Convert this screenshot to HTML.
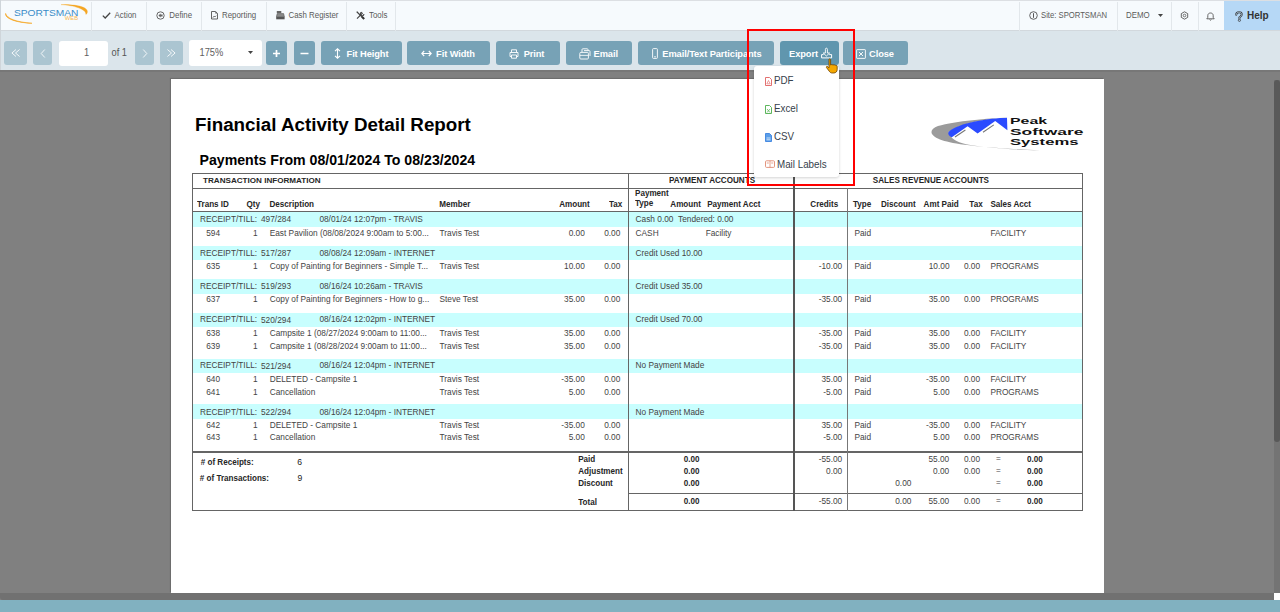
<!DOCTYPE html>
<html><head><meta charset="utf-8">
<style>
*{box-sizing:border-box}
html,body{margin:0;padding:0}
body{width:1280px;height:612px;overflow:hidden;position:relative;font-family:"Liberation Sans",sans-serif;background:#808080}
.t{position:absolute;white-space:nowrap;line-height:1}
.t.r{text-align:right}
.b{position:absolute}
#nav{position:absolute;left:0;top:0;width:1280px;height:31px;background:#f6fafd;border-top:1px solid #dcdfe3;border-bottom:1px solid #d2d8dd}
.sep{position:absolute;top:1px;width:1px;height:29px;background:#e2e7eb}
.nt{position:absolute;top:0;line-height:1;font-size:7.9px;color:#5a5a5a;white-space:nowrap}
#nav .nt{transform:scaleY(1.18);transform-origin:0 6.7px;margin-top:1.4px}
#tb{position:absolute;left:0;top:31px;width:1280px;height:39px;background:#dbe5eb}
.btn{position:absolute;top:41px;height:24px;border-radius:3px;background:#77a2b6;color:#fff;font-weight:700;font-size:9.3px;line-height:26.4px;text-align:center;white-space:nowrap;letter-spacing:-0.1px}
.dis{background:#abc5d1}
.btn svg{position:absolute}
#viewer{position:absolute;left:0;top:70px;width:1280px;height:523px;background:#808080}
</style></head><body>
<div id="viewer"></div>
<div class="b" style="left:0;top:70px;width:1280px;height:2px;background:#777"></div>
<div class="b" style="left:171px;top:79px;width:933px;height:514px;background:#fff;box-shadow:-1px -1px 1px rgba(0,0,0,0.15)"></div>
<div class="t" style="left:195.00px;top:115.59px;font-size:18.8px;font-weight:700;color:#000;">Financial Activity Detail Report</div>
<div class="t" style="left:199.50px;top:152.82px;font-size:14.15px;font-weight:700;color:#000;">Payments From 08/01/2024 To 08/23/2024</div>
<svg style="position:absolute;left:925px;top:110px" width="165" height="45" viewBox="925 110 165 45">
<path d="M1007 117.7 C990 118 955 121 938 126 C929 129.5 929 135 940 139.5 C952 144 975 147.2 1040 150.4 C1010 149.6 990 147.8 975 145.8 C962 144 954 140.8 951.5 137.2 L948.5 132 C960 123 990 118.5 1007 117.7 Z" fill="#9b9b9b"/>
<path d="M948.5 132 C958 122.5 990 118.2 1007 117.7 L1007.4 130.2 L995.2 121 L977.6 133.5 L967.6 126.2 L951.8 137.2 C949 136 947.6 134 948.5 132 Z" fill="#2b4bff"/>
<path d="M955 137 L965.4 130 M983 132.2 L993.8 124.9" stroke="#777" stroke-width="1.1"/>
<text x="1010" y="124.3" font-family="Liberation Sans" font-weight="700" font-size="8.8" fill="#111" textLength="37" lengthAdjust="spacingAndGlyphs">Peak</text>
<text x="1010" y="135.2" font-family="Liberation Sans" font-weight="700" font-size="8.8" fill="#111" textLength="73.5" lengthAdjust="spacingAndGlyphs">Software</text>
<text x="1010" y="145.1" font-family="Liberation Sans" font-weight="700" font-size="8.8" fill="#111" textLength="68.5" lengthAdjust="spacingAndGlyphs">Systems</text>
</svg>
<div class="b" style="left:193px;top:211.9px;width:889.5px;height:14.7px;background:#c8fefe;"></div>
<div class="b" style="left:193px;top:245.6px;width:889.5px;height:14.7px;background:#c8fefe;"></div>
<div class="b" style="left:193px;top:279px;width:889.5px;height:14.7px;background:#c8fefe;"></div>
<div class="b" style="left:193px;top:312.5px;width:889.5px;height:14.7px;background:#c8fefe;"></div>
<div class="b" style="left:193px;top:358.6px;width:889.5px;height:14.7px;background:#c8fefe;"></div>
<div class="b" style="left:193px;top:404.2px;width:889.5px;height:14.7px;background:#c8fefe;"></div>
<div class="b" style="left:192px;top:172.9px;width:891.2px;height:1.2px;background:#656565;"></div>
<div class="b" style="left:192px;top:187.70000000000002px;width:891.2px;height:1.2px;background:#656565;"></div>
<div class="b" style="left:192px;top:210.8px;width:891.2px;height:1.2px;background:#656565;"></div>
<div class="b" style="left:192px;top:451.4px;width:891.2px;height:1.2px;background:#656565;"></div>
<div class="b" style="left:628.5px;top:492.9px;width:454.70000000000005px;height:1.2px;background:#656565;"></div>
<div class="b" style="left:192px;top:510.2px;width:891.2px;height:1.2px;background:#656565;"></div>
<div class="b" style="left:192.0px;top:173px;width:1.2px;height:338.4px;background:#656565;"></div>
<div class="b" style="left:1082.0px;top:173px;width:1.2px;height:338.4px;background:#656565;"></div>
<div class="b" style="left:627.9px;top:173px;width:1.2px;height:338.4px;background:#656565;"></div>
<div class="b" style="left:793.2px;top:173px;width:2px;height:338.4px;background:#555;"></div>
<div class="b" style="left:846.75px;top:188.3px;width:1.1px;height:322.5px;background:#777;"></div>
<div class="t" style="left:203.00px;top:176.74px;font-size:8.1px;font-weight:700;color:#262626;letter-spacing:0.05pxtransform:scaleY(1.2);transform-origin:0 6.86px;">TRANSACTION INFORMATION</div>
<div class="t" style="left:669.00px;top:176.74px;font-size:8.1px;font-weight:700;color:#262626;transform:scaleY(1.2);transform-origin:0 6.86px;">PAYMENT ACCOUNTS</div>
<div class="t" style="left:872.80px;top:176.74px;font-size:8.1px;font-weight:700;color:#262626;transform:scaleY(1.2);transform-origin:0 6.86px;">SALES REVENUE ACCOUNTS</div>
<div class="t" style="left:197.00px;top:200.94px;font-size:8.1px;font-weight:700;color:#262626;transform:scaleY(1.2);transform-origin:0 6.86px;">Trans ID</div>
<div class="t" style="left:246.50px;top:200.94px;font-size:8.1px;font-weight:700;color:#262626;transform:scaleY(1.2);transform-origin:0 6.86px;">Qty</div>
<div class="t" style="left:269.50px;top:200.94px;font-size:8.1px;font-weight:700;color:#262626;transform:scaleY(1.2);transform-origin:0 6.86px;">Description</div>
<div class="t" style="left:439.30px;top:200.94px;font-size:8.1px;font-weight:700;color:#262626;transform:scaleY(1.2);transform-origin:0 6.86px;">Member</div>
<div class="t" style="left:559.20px;top:200.94px;font-size:8.1px;font-weight:700;color:#262626;transform:scaleY(1.2);transform-origin:0 6.86px;">Amount</div>
<div class="t" style="left:609.00px;top:200.94px;font-size:8.1px;font-weight:700;color:#262626;transform:scaleY(1.2);transform-origin:0 6.86px;">Tax</div>
<div class="t" style="left:670.30px;top:200.94px;font-size:8.1px;font-weight:700;color:#262626;transform:scaleY(1.2);transform-origin:0 6.86px;">Amount</div>
<div class="t" style="left:707.20px;top:200.94px;font-size:8.1px;font-weight:700;color:#262626;transform:scaleY(1.2);transform-origin:0 6.86px;">Payment Acct</div>
<div class="t" style="left:810.30px;top:200.94px;font-size:8.1px;font-weight:700;color:#262626;transform:scaleY(1.2);transform-origin:0 6.86px;">Credits</div>
<div class="t" style="left:852.90px;top:200.94px;font-size:8.1px;font-weight:700;color:#262626;transform:scaleY(1.2);transform-origin:0 6.86px;">Type</div>
<div class="t" style="left:881.00px;top:200.94px;font-size:8.1px;font-weight:700;color:#262626;transform:scaleY(1.2);transform-origin:0 6.86px;">Discount</div>
<div class="t" style="left:923.60px;top:200.94px;font-size:8.1px;font-weight:700;color:#262626;transform:scaleY(1.2);transform-origin:0 6.86px;">Amt Paid</div>
<div class="t" style="left:969.30px;top:200.94px;font-size:8.1px;font-weight:700;color:#262626;transform:scaleY(1.2);transform-origin:0 6.86px;">Tax</div>
<div class="t" style="left:990.40px;top:200.94px;font-size:8.1px;font-weight:700;color:#262626;transform:scaleY(1.2);transform-origin:0 6.86px;">Sales Acct</div>
<div class="t" style="left:635.00px;top:190.34px;font-size:8.1px;font-weight:700;color:#262626;transform:scaleY(1.2);transform-origin:0 6.86px;">Payment</div>
<div class="t" style="left:635.00px;top:199.94px;font-size:8.1px;font-weight:700;color:#262626;transform:scaleY(1.2);transform-origin:0 6.86px;">Type</div>
<div class="t" style="left:200.00px;top:214.67px;font-size:8.3px;font-weight:400;color:#444444;">RECEIPT/TILL:</div>
<div class="t" style="left:261.00px;top:215.17px;font-size:8.3px;font-weight:400;color:#444444;">497/284</div>
<div class="t" style="left:319.40px;top:214.67px;font-size:8.3px;font-weight:400;color:#444444;">08/01/24 12:07pm - TRAVIS</div>
<div class="t" style="left:635.60px;top:214.67px;font-size:8.3px;font-weight:400;color:#444444;">Cash 0.00&nbsp;&nbsp;Tendered: 0.00</div>
<div class="t" style="left:206.20px;top:228.97px;font-size:8.3px;font-weight:400;color:#444444;">594</div>
<div class="t r" style="left:-42.40px;top:228.97px;width:300px;font-size:8.3px;font-weight:400;color:#444444;">1</div>
<div class="t" style="left:269.70px;top:228.97px;font-size:8.3px;font-weight:400;color:#444444;">East Pavilion (08/08/2024 9:00am to 5:00...</div>
<div class="t" style="left:439.50px;top:228.97px;font-size:8.3px;font-weight:400;color:#444444;">Travis Test</div>
<div class="t r" style="left:284.80px;top:228.97px;width:300px;font-size:8.3px;font-weight:400;color:#444444;">0.00</div>
<div class="t r" style="left:320.30px;top:228.97px;width:300px;font-size:8.3px;font-weight:400;color:#444444;">0.00</div>
<div class="t" style="left:635.60px;top:228.97px;font-size:8.3px;font-weight:400;color:#444444;">CASH</div>
<div class="t" style="left:705.70px;top:228.97px;font-size:8.3px;font-weight:400;color:#444444;">Facility</div>
<div class="t" style="left:854.40px;top:228.97px;font-size:8.3px;font-weight:400;color:#444444;">Paid</div>
<div class="t" style="left:990.40px;top:228.97px;font-size:8.3px;font-weight:400;color:#444444;">FACILITY</div>
<div class="t" style="left:200.00px;top:248.67px;font-size:8.3px;font-weight:400;color:#444444;">RECEIPT/TILL:</div>
<div class="t" style="left:261.00px;top:249.17px;font-size:8.3px;font-weight:400;color:#444444;">517/287</div>
<div class="t" style="left:319.40px;top:248.67px;font-size:8.3px;font-weight:400;color:#444444;">08/08/24 12:09am - INTERNET</div>
<div class="t" style="left:635.60px;top:248.67px;font-size:8.3px;font-weight:400;color:#444444;">Credit Used 10.00</div>
<div class="t" style="left:206.20px;top:262.27px;font-size:8.3px;font-weight:400;color:#444444;">635</div>
<div class="t r" style="left:-42.40px;top:262.27px;width:300px;font-size:8.3px;font-weight:400;color:#444444;">1</div>
<div class="t" style="left:269.70px;top:262.27px;font-size:8.3px;font-weight:400;color:#444444;">Copy of Painting for Beginners - Simple T...</div>
<div class="t" style="left:439.50px;top:262.27px;font-size:8.3px;font-weight:400;color:#444444;">Travis Test</div>
<div class="t r" style="left:284.80px;top:262.27px;width:300px;font-size:8.3px;font-weight:400;color:#444444;">10.00</div>
<div class="t r" style="left:320.30px;top:262.27px;width:300px;font-size:8.3px;font-weight:400;color:#444444;">0.00</div>
<div class="t r" style="left:542.20px;top:262.27px;width:300px;font-size:8.3px;font-weight:400;color:#444444;">-10.00</div>
<div class="t" style="left:854.40px;top:262.27px;font-size:8.3px;font-weight:400;color:#444444;">Paid</div>
<div class="t r" style="left:649.50px;top:262.27px;width:300px;font-size:8.3px;font-weight:400;color:#444444;">10.00</div>
<div class="t r" style="left:680.10px;top:262.27px;width:300px;font-size:8.3px;font-weight:400;color:#444444;">0.00</div>
<div class="t" style="left:990.40px;top:262.27px;font-size:8.3px;font-weight:400;color:#444444;">PROGRAMS</div>
<div class="t" style="left:200.00px;top:281.67px;font-size:8.3px;font-weight:400;color:#444444;">RECEIPT/TILL:</div>
<div class="t" style="left:261.00px;top:282.17px;font-size:8.3px;font-weight:400;color:#444444;">519/293</div>
<div class="t" style="left:319.40px;top:281.67px;font-size:8.3px;font-weight:400;color:#444444;">08/16/24 10:26am - TRAVIS</div>
<div class="t" style="left:635.60px;top:281.67px;font-size:8.3px;font-weight:400;color:#444444;">Credit Used 35.00</div>
<div class="t" style="left:206.20px;top:295.47px;font-size:8.3px;font-weight:400;color:#444444;">637</div>
<div class="t r" style="left:-42.40px;top:295.47px;width:300px;font-size:8.3px;font-weight:400;color:#444444;">1</div>
<div class="t" style="left:269.70px;top:295.47px;font-size:8.3px;font-weight:400;color:#444444;">Copy of Painting for Beginners - How to g...</div>
<div class="t" style="left:439.50px;top:295.47px;font-size:8.3px;font-weight:400;color:#444444;">Steve Test</div>
<div class="t r" style="left:284.80px;top:295.47px;width:300px;font-size:8.3px;font-weight:400;color:#444444;">35.00</div>
<div class="t r" style="left:320.30px;top:295.47px;width:300px;font-size:8.3px;font-weight:400;color:#444444;">0.00</div>
<div class="t r" style="left:542.20px;top:295.47px;width:300px;font-size:8.3px;font-weight:400;color:#444444;">-35.00</div>
<div class="t" style="left:854.40px;top:295.47px;font-size:8.3px;font-weight:400;color:#444444;">Paid</div>
<div class="t r" style="left:649.50px;top:295.47px;width:300px;font-size:8.3px;font-weight:400;color:#444444;">35.00</div>
<div class="t r" style="left:680.10px;top:295.47px;width:300px;font-size:8.3px;font-weight:400;color:#444444;">0.00</div>
<div class="t" style="left:990.40px;top:295.47px;font-size:8.3px;font-weight:400;color:#444444;">PROGRAMS</div>
<div class="t" style="left:200.00px;top:315.37px;font-size:8.3px;font-weight:400;color:#444444;">RECEIPT/TILL:</div>
<div class="t" style="left:261.00px;top:315.87px;font-size:8.3px;font-weight:400;color:#444444;">520/294</div>
<div class="t" style="left:319.40px;top:315.37px;font-size:8.3px;font-weight:400;color:#444444;">08/16/24 12:02pm - INTERNET</div>
<div class="t" style="left:635.60px;top:315.37px;font-size:8.3px;font-weight:400;color:#444444;">Credit Used 70.00</div>
<div class="t" style="left:206.20px;top:328.97px;font-size:8.3px;font-weight:400;color:#444444;">638</div>
<div class="t r" style="left:-42.40px;top:328.97px;width:300px;font-size:8.3px;font-weight:400;color:#444444;">1</div>
<div class="t" style="left:269.70px;top:328.97px;font-size:8.3px;font-weight:400;color:#444444;">Campsite 1 (08/27/2024 9:00am to 11:00...</div>
<div class="t" style="left:439.50px;top:328.97px;font-size:8.3px;font-weight:400;color:#444444;">Travis Test</div>
<div class="t r" style="left:284.80px;top:328.97px;width:300px;font-size:8.3px;font-weight:400;color:#444444;">35.00</div>
<div class="t r" style="left:320.30px;top:328.97px;width:300px;font-size:8.3px;font-weight:400;color:#444444;">0.00</div>
<div class="t r" style="left:542.20px;top:328.97px;width:300px;font-size:8.3px;font-weight:400;color:#444444;">-35.00</div>
<div class="t" style="left:854.40px;top:328.97px;font-size:8.3px;font-weight:400;color:#444444;">Paid</div>
<div class="t r" style="left:649.50px;top:328.97px;width:300px;font-size:8.3px;font-weight:400;color:#444444;">35.00</div>
<div class="t r" style="left:680.10px;top:328.97px;width:300px;font-size:8.3px;font-weight:400;color:#444444;">0.00</div>
<div class="t" style="left:990.40px;top:328.97px;font-size:8.3px;font-weight:400;color:#444444;">FACILITY</div>
<div class="t" style="left:206.20px;top:341.97px;font-size:8.3px;font-weight:400;color:#444444;">639</div>
<div class="t r" style="left:-42.40px;top:341.97px;width:300px;font-size:8.3px;font-weight:400;color:#444444;">1</div>
<div class="t" style="left:269.70px;top:341.97px;font-size:8.3px;font-weight:400;color:#444444;">Campsite 1 (08/28/2024 9:00am to 11:00...</div>
<div class="t" style="left:439.50px;top:341.97px;font-size:8.3px;font-weight:400;color:#444444;">Travis Test</div>
<div class="t r" style="left:284.80px;top:341.97px;width:300px;font-size:8.3px;font-weight:400;color:#444444;">35.00</div>
<div class="t r" style="left:320.30px;top:341.97px;width:300px;font-size:8.3px;font-weight:400;color:#444444;">0.00</div>
<div class="t r" style="left:542.20px;top:341.97px;width:300px;font-size:8.3px;font-weight:400;color:#444444;">-35.00</div>
<div class="t" style="left:854.40px;top:341.97px;font-size:8.3px;font-weight:400;color:#444444;">Paid</div>
<div class="t r" style="left:649.50px;top:341.97px;width:300px;font-size:8.3px;font-weight:400;color:#444444;">35.00</div>
<div class="t r" style="left:680.10px;top:341.97px;width:300px;font-size:8.3px;font-weight:400;color:#444444;">0.00</div>
<div class="t" style="left:990.40px;top:341.97px;font-size:8.3px;font-weight:400;color:#444444;">FACILITY</div>
<div class="t" style="left:200.00px;top:361.47px;font-size:8.3px;font-weight:400;color:#444444;">RECEIPT/TILL:</div>
<div class="t" style="left:261.00px;top:361.97px;font-size:8.3px;font-weight:400;color:#444444;">521/294</div>
<div class="t" style="left:319.40px;top:361.47px;font-size:8.3px;font-weight:400;color:#444444;">08/16/24 12:04pm - INTERNET</div>
<div class="t" style="left:635.60px;top:361.47px;font-size:8.3px;font-weight:400;color:#444444;">No Payment Made</div>
<div class="t" style="left:206.20px;top:375.07px;font-size:8.3px;font-weight:400;color:#444444;">640</div>
<div class="t r" style="left:-42.40px;top:375.07px;width:300px;font-size:8.3px;font-weight:400;color:#444444;">1</div>
<div class="t" style="left:269.70px;top:375.07px;font-size:8.3px;font-weight:400;color:#444444;">DELETED - Campsite 1</div>
<div class="t" style="left:439.50px;top:375.07px;font-size:8.3px;font-weight:400;color:#444444;">Travis Test</div>
<div class="t r" style="left:284.80px;top:375.07px;width:300px;font-size:8.3px;font-weight:400;color:#444444;">-35.00</div>
<div class="t r" style="left:320.30px;top:375.07px;width:300px;font-size:8.3px;font-weight:400;color:#444444;">0.00</div>
<div class="t r" style="left:542.20px;top:375.07px;width:300px;font-size:8.3px;font-weight:400;color:#444444;">35.00</div>
<div class="t" style="left:854.40px;top:375.07px;font-size:8.3px;font-weight:400;color:#444444;">Paid</div>
<div class="t r" style="left:649.50px;top:375.07px;width:300px;font-size:8.3px;font-weight:400;color:#444444;">-35.00</div>
<div class="t r" style="left:680.10px;top:375.07px;width:300px;font-size:8.3px;font-weight:400;color:#444444;">0.00</div>
<div class="t" style="left:990.40px;top:375.07px;font-size:8.3px;font-weight:400;color:#444444;">FACILITY</div>
<div class="t" style="left:206.20px;top:387.87px;font-size:8.3px;font-weight:400;color:#444444;">641</div>
<div class="t r" style="left:-42.40px;top:387.87px;width:300px;font-size:8.3px;font-weight:400;color:#444444;">1</div>
<div class="t" style="left:269.70px;top:387.87px;font-size:8.3px;font-weight:400;color:#444444;">Cancellation</div>
<div class="t" style="left:439.50px;top:387.87px;font-size:8.3px;font-weight:400;color:#444444;">Travis Test</div>
<div class="t r" style="left:284.80px;top:387.87px;width:300px;font-size:8.3px;font-weight:400;color:#444444;">5.00</div>
<div class="t r" style="left:320.30px;top:387.87px;width:300px;font-size:8.3px;font-weight:400;color:#444444;">0.00</div>
<div class="t r" style="left:542.20px;top:387.87px;width:300px;font-size:8.3px;font-weight:400;color:#444444;">-5.00</div>
<div class="t" style="left:854.40px;top:387.87px;font-size:8.3px;font-weight:400;color:#444444;">Paid</div>
<div class="t r" style="left:649.50px;top:387.87px;width:300px;font-size:8.3px;font-weight:400;color:#444444;">5.00</div>
<div class="t r" style="left:680.10px;top:387.87px;width:300px;font-size:8.3px;font-weight:400;color:#444444;">0.00</div>
<div class="t" style="left:990.40px;top:387.87px;font-size:8.3px;font-weight:400;color:#444444;">PROGRAMS</div>
<div class="t" style="left:200.00px;top:407.57px;font-size:8.3px;font-weight:400;color:#444444;">RECEIPT/TILL:</div>
<div class="t" style="left:261.00px;top:408.07px;font-size:8.3px;font-weight:400;color:#444444;">522/294</div>
<div class="t" style="left:319.40px;top:407.57px;font-size:8.3px;font-weight:400;color:#444444;">08/16/24 12:04pm - INTERNET</div>
<div class="t" style="left:635.60px;top:407.57px;font-size:8.3px;font-weight:400;color:#444444;">No Payment Made</div>
<div class="t" style="left:206.20px;top:421.17px;font-size:8.3px;font-weight:400;color:#444444;">642</div>
<div class="t r" style="left:-42.40px;top:421.17px;width:300px;font-size:8.3px;font-weight:400;color:#444444;">1</div>
<div class="t" style="left:269.70px;top:421.17px;font-size:8.3px;font-weight:400;color:#444444;">DELETED - Campsite 1</div>
<div class="t" style="left:439.50px;top:421.17px;font-size:8.3px;font-weight:400;color:#444444;">Travis Test</div>
<div class="t r" style="left:284.80px;top:421.17px;width:300px;font-size:8.3px;font-weight:400;color:#444444;">-35.00</div>
<div class="t r" style="left:320.30px;top:421.17px;width:300px;font-size:8.3px;font-weight:400;color:#444444;">0.00</div>
<div class="t r" style="left:542.20px;top:421.17px;width:300px;font-size:8.3px;font-weight:400;color:#444444;">35.00</div>
<div class="t" style="left:854.40px;top:421.17px;font-size:8.3px;font-weight:400;color:#444444;">Paid</div>
<div class="t r" style="left:649.50px;top:421.17px;width:300px;font-size:8.3px;font-weight:400;color:#444444;">-35.00</div>
<div class="t r" style="left:680.10px;top:421.17px;width:300px;font-size:8.3px;font-weight:400;color:#444444;">0.00</div>
<div class="t" style="left:990.40px;top:421.17px;font-size:8.3px;font-weight:400;color:#444444;">FACILITY</div>
<div class="t" style="left:206.20px;top:433.37px;font-size:8.3px;font-weight:400;color:#444444;">643</div>
<div class="t r" style="left:-42.40px;top:433.37px;width:300px;font-size:8.3px;font-weight:400;color:#444444;">1</div>
<div class="t" style="left:269.70px;top:433.37px;font-size:8.3px;font-weight:400;color:#444444;">Cancellation</div>
<div class="t" style="left:439.50px;top:433.37px;font-size:8.3px;font-weight:400;color:#444444;">Travis Test</div>
<div class="t r" style="left:284.80px;top:433.37px;width:300px;font-size:8.3px;font-weight:400;color:#444444;">5.00</div>
<div class="t r" style="left:320.30px;top:433.37px;width:300px;font-size:8.3px;font-weight:400;color:#444444;">0.00</div>
<div class="t r" style="left:542.20px;top:433.37px;width:300px;font-size:8.3px;font-weight:400;color:#444444;">-5.00</div>
<div class="t" style="left:854.40px;top:433.37px;font-size:8.3px;font-weight:400;color:#444444;">Paid</div>
<div class="t r" style="left:649.50px;top:433.37px;width:300px;font-size:8.3px;font-weight:400;color:#444444;">5.00</div>
<div class="t r" style="left:680.10px;top:433.37px;width:300px;font-size:8.3px;font-weight:400;color:#444444;">0.00</div>
<div class="t" style="left:990.40px;top:433.37px;font-size:8.3px;font-weight:400;color:#444444;">PROGRAMS</div>
<div class="t" style="left:200.70px;top:458.64px;font-size:8.1px;font-weight:700;color:#262626;transform:scaleY(1.2);transform-origin:0 6.86px;"># of Receipts:</div>
<div class="t" style="left:297.20px;top:458.22px;font-size:8.6px;font-weight:400;color:#222;transform:scaleY(1.1);transform-origin:0 7.28px;">6</div>
<div class="t" style="left:199.80px;top:474.54px;font-size:8.1px;font-weight:700;color:#262626;transform:scaleY(1.2);transform-origin:0 6.86px;"># of Transactions:</div>
<div class="t" style="left:297.40px;top:474.12px;font-size:8.6px;font-weight:400;color:#222;transform:scaleY(1.1);transform-origin:0 7.28px;">9</div>
<div class="t" style="left:578.20px;top:456.44px;font-size:8.1px;font-weight:700;color:#262626;transform:scaleY(1.2);transform-origin:0 6.86px;">Paid</div>
<div class="t" style="left:578.20px;top:468.14px;font-size:8.1px;font-weight:700;color:#262626;transform:scaleY(1.2);transform-origin:0 6.86px;">Adjustment</div>
<div class="t" style="left:578.20px;top:480.04px;font-size:8.1px;font-weight:700;color:#262626;transform:scaleY(1.2);transform-origin:0 6.86px;">Discount</div>
<div class="t" style="left:578.20px;top:498.74px;font-size:8.1px;font-weight:700;color:#262626;transform:scaleY(1.2);transform-origin:0 6.86px;">Total</div>
<div class="t r" style="left:399.40px;top:456.34px;width:300px;font-size:8.1px;font-weight:700;color:#262626;transform:scaleY(1.2);transform-origin:0 6.86px;">0.00</div>
<div class="t" style="left:996.00px;top:455.34px;font-size:8.1px;font-weight:400;color:#444444;">=</div>
<div class="t r" style="left:742.80px;top:456.34px;width:300px;font-size:8.1px;font-weight:700;color:#262626;transform:scaleY(1.2);transform-origin:0 6.86px;">0.00</div>
<div class="t r" style="left:399.40px;top:468.14px;width:300px;font-size:8.1px;font-weight:700;color:#262626;transform:scaleY(1.2);transform-origin:0 6.86px;">0.00</div>
<div class="t" style="left:996.00px;top:467.14px;font-size:8.1px;font-weight:400;color:#444444;">=</div>
<div class="t r" style="left:742.80px;top:468.14px;width:300px;font-size:8.1px;font-weight:700;color:#262626;transform:scaleY(1.2);transform-origin:0 6.86px;">0.00</div>
<div class="t r" style="left:399.40px;top:480.14px;width:300px;font-size:8.1px;font-weight:700;color:#262626;transform:scaleY(1.2);transform-origin:0 6.86px;">0.00</div>
<div class="t" style="left:996.00px;top:479.14px;font-size:8.1px;font-weight:400;color:#444444;">=</div>
<div class="t r" style="left:742.80px;top:480.14px;width:300px;font-size:8.1px;font-weight:700;color:#262626;transform:scaleY(1.2);transform-origin:0 6.86px;">0.00</div>
<div class="t r" style="left:399.40px;top:498.34px;width:300px;font-size:8.1px;font-weight:700;color:#262626;transform:scaleY(1.2);transform-origin:0 6.86px;">0.00</div>
<div class="t" style="left:996.00px;top:497.34px;font-size:8.1px;font-weight:400;color:#444444;">=</div>
<div class="t r" style="left:742.80px;top:498.34px;width:300px;font-size:8.1px;font-weight:700;color:#262626;transform:scaleY(1.2);transform-origin:0 6.86px;">0.00</div>
<div class="t r" style="left:542.20px;top:455.17px;width:300px;font-size:8.3px;font-weight:400;color:#444444;">-55.00</div>
<div class="t r" style="left:542.20px;top:466.97px;width:300px;font-size:8.3px;font-weight:400;color:#444444;">0.00</div>
<div class="t r" style="left:542.20px;top:497.17px;width:300px;font-size:8.3px;font-weight:400;color:#444444;">-55.00</div>
<div class="t r" style="left:611.40px;top:478.97px;width:300px;font-size:8.3px;font-weight:400;color:#444444;">0.00</div>
<div class="t r" style="left:611.40px;top:497.17px;width:300px;font-size:8.3px;font-weight:400;color:#444444;">0.00</div>
<div class="t r" style="left:649.20px;top:455.17px;width:300px;font-size:8.3px;font-weight:400;color:#444444;">55.00</div>
<div class="t r" style="left:680.10px;top:455.17px;width:300px;font-size:8.3px;font-weight:400;color:#444444;">0.00</div>
<div class="t r" style="left:649.20px;top:466.97px;width:300px;font-size:8.3px;font-weight:400;color:#444444;">0.00</div>
<div class="t r" style="left:680.10px;top:466.97px;width:300px;font-size:8.3px;font-weight:400;color:#444444;">0.00</div>
<div class="t r" style="left:649.20px;top:497.17px;width:300px;font-size:8.3px;font-weight:400;color:#444444;">55.00</div>
<div class="t r" style="left:680.10px;top:497.17px;width:300px;font-size:8.3px;font-weight:400;color:#444444;">0.00</div>
<!-- scrollbars -->
<div class="b" style="left:1274px;top:80px;width:6px;height:513px;background:#747474"></div>
<div class="b" style="left:1274px;top:80px;width:6px;height:362px;background:#595959;border-radius:3px"></div>
<div class="b" style="left:0;top:593px;width:1274px;height:7px;background:#717171;border-radius:0 0 0 3px"></div>
<div class="b" style="left:1274px;top:593px;width:6px;height:7px;background:#fff"></div>
<div class="b" style="left:0;top:600px;width:1280px;height:12px;background:#81b1c0"></div>

<!-- NAV -->
<div id="nav">
  <svg style="position:absolute;left:0;top:-1px" width="92" height="29" viewBox="0 0 92 29">
    <path d="M5.6 13.4 C4.6 18.2 15 22.6 32 23.3 C16 22 6.8 18.4 5.6 13.4 Z" fill="#f5a623" stroke="#f5a623" stroke-width="0.6"/>
    <path d="M61 4.6 C72 4.2 87.2 6 87.4 11.4 C87.5 12.8 86.8 13.9 85.9 14.5 C86.4 9.2 74 5.4 61 4.6 Z" fill="#f5a623" stroke="#f5a623" stroke-width="0.3"/>
    <text x="14" y="15.6" font-family="Liberation Sans" font-size="7.4" font-weight="400" fill="#3a8cc8" textLength="64.5" lengthAdjust="spacingAndGlyphs" transform="translate(0,15.6) scale(1,1.12) translate(0,-15.6)">SPORTSMAN</text>
    <text x="64.8" y="20.3" font-family="Liberation Sans" font-size="4.6" font-weight="400" fill="#f7b850" textLength="13.2" lengthAdjust="spacingAndGlyphs">WEB</text>
  </svg>
  <div class="sep" style="left:91px"></div>
  <svg style="position:absolute;left:101.5px;top:11.2px" width="9" height="7" viewBox="0 0 9 7"><path d="M0.8 3.6 L3.2 6 L8.2 0.8" fill="none" stroke="#444" stroke-width="1.3"/></svg>
  <div class="nt" style="left:114.5px;top:9.6px">Action</div>
  <div class="sep" style="left:146px"></div>
  <svg style="position:absolute;left:155.5px;top:9.8px" width="9" height="9" viewBox="0 0 9 9"><circle cx="4.5" cy="4.5" r="3.7" fill="none" stroke="#666" stroke-width="1"/><path d="M2.4 4.5 L4.6 2.4 V3.6 H6.6 V5.4 H4.6 V6.6 Z" fill="#666"/></svg>
  <div class="nt" style="left:169.3px;top:9.6px">Define</div>
  <div class="sep" style="left:201px"></div>
  <svg style="position:absolute;left:210.8px;top:10.2px" width="7" height="8.5" viewBox="0 0 7 8.5"><path d="M0.5 0.5 H4.6 L6.5 2.4 V8 H0.5 Z" fill="none" stroke="#555" stroke-width="0.9"/><path d="M4.4 0.5 V2.6 H6.5 Z" fill="#555"/><path d="M1.8 6.8 L3 5 L4 6 L5.2 4.6" fill="none" stroke="#555" stroke-width="0.7"/></svg>
  <div class="nt" style="left:222px;top:9.6px">Reporting</div>
  <div class="sep" style="left:266px"></div>
  <svg style="position:absolute;left:275.8px;top:10.2px" width="9" height="8.5" viewBox="0 0 9 8.5"><rect x="0.8" y="0" width="4.5" height="2.2" fill="#666"/><path d="M1.2 2.6 H7.6 L8.4 5.8 H0.4 Z" fill="#8a8a8a" stroke="#555" stroke-width="0.6"/><rect x="0.2" y="5.8" width="8.4" height="2.5" fill="#555"/></svg>
  <div class="nt" style="left:288.5px;top:9.6px">Cash Register</div>
  <div class="sep" style="left:346px"></div>
  <svg style="position:absolute;left:355.8px;top:10.2px" width="9" height="8.5" viewBox="0 0 9 8.5"><path d="M1 1 L7.8 7.6" stroke="#444" stroke-width="1.2"/><path d="M5.8 5.6 L8.2 8" stroke="#333" stroke-width="2"/><path d="M1 7.6 L6.6 2" stroke="#444" stroke-width="1.1"/><path d="M6.1 1.2 A1.8 1.8 0 1 0 7.9 3" fill="none" stroke="#444" stroke-width="1.1"/><path d="M0.4 0.4 L2 0.8 L1 2 Z" fill="#444"/></svg>
  <div class="nt" style="left:369px;top:9.6px">Tools</div>
  <div class="sep" style="left:395px"></div>

  <div class="sep" style="left:1019px"></div>
  <svg style="position:absolute;left:1028.5px;top:9.5px" width="9" height="9" viewBox="0 0 9 9"><circle cx="4.5" cy="4.5" r="3.8" fill="none" stroke="#555" stroke-width="0.9"/><path d="M4.5 2.2 V6.8" stroke="#555" stroke-width="1"/></svg>
  <div class="nt" style="left:1041px;top:9.6px;font-size:7.7px">Site: SPORTSMAN</div>
  <div class="sep" style="left:1117px"></div>
  <div class="nt" style="left:1126px;top:9.6px">DEMO</div>
  <svg style="position:absolute;left:1157.5px;top:13.3px" width="5" height="3" viewBox="0 0 5 3"><path d="M0 0 H5 L2.5 3 Z" fill="#444"/></svg>
  <div class="sep" style="left:1171px"></div>
  <svg style="position:absolute;left:1180px;top:9.5px" width="9" height="9" viewBox="0 0 9 9"><path d="M4.5 0.8 L7.7 2.6 V6.4 L4.5 8.2 L1.3 6.4 V2.6 Z" fill="none" stroke="#555" stroke-width="0.9"/><circle cx="4.5" cy="4.5" r="1.3" fill="none" stroke="#555" stroke-width="0.8"/></svg>
  <div class="sep" style="left:1198px"></div>
  <svg style="position:absolute;left:1206px;top:10.5px" width="9" height="9" viewBox="0 0 9 9"><path d="M0.8 6.8 H8.2 L7.2 5.4 V3.6 C7.2 1.9 6 1 4.5 1 C3 1 1.8 1.9 1.8 3.6 V5.4 Z" fill="none" stroke="#555" stroke-width="0.9" stroke-linejoin="round"/><path d="M3.6 7.6 C4 8.4 5 8.4 5.4 7.6" fill="none" stroke="#555" stroke-width="0.8"/></svg>
  <div class="b" style="left:1223.5px;top:0;width:56.5px;height:29px;background:#b6d8f6"></div>
  <svg style="position:absolute;left:1234px;top:9.6px" width="10" height="11" viewBox="0 0 10 11"><path d="M2.2 3.8 C2.2 2 3.4 1.2 5 1.2 C6.8 1.2 7.8 2.2 7.8 3.6 C7.8 5 6.4 5.5 5.4 6.4 V7.6" fill="none" stroke="#3a3a3a" stroke-width="2" stroke-linecap="round"/><path d="M2.2 3.8 C2.2 2 3.4 1.2 5 1.2 C6.8 1.2 7.8 2.2 7.8 3.6 C7.8 5 6.4 5.5 5.4 6.4 V7.6" fill="none" stroke="#b6d8f6" stroke-width="0.7" stroke-linecap="round"/><circle cx="5.4" cy="9.3" r="1.1" fill="#b6d8f6" stroke="#3a3a3a" stroke-width="0.8"/></svg>
  <div class="nt" style="left:1247px;top:9px;font-size:10px;font-weight:700;color:#333">Help</div>
</div>

<!-- TOOLBAR -->
<div id="tb"></div>
<div class="b" style="left:0;top:0;width:1px;height:70px;background:#cfd5da"></div>
<div class="btn dis" style="left:4px;width:23px"><svg style="left:6px;top:8px" width="11" height="8" viewBox="0 0 11 8"><path d="M6 0.5 L1.9 4 L6 7.5 M9.6 0.5 L5.5 4 L9.6 7.5" fill="none" stroke="#fff" stroke-opacity="0.85" stroke-width="1"/></svg></div>
<div class="btn dis" style="left:33px;width:19px"><svg style="left:6.5px;top:7.8px" width="6" height="9" viewBox="0 0 6 9"><path d="M4.8 0.5 L1.2 4.5 L4.8 8.5" fill="none" stroke="#fff" stroke-opacity="0.85" stroke-width="1"/></svg></div>
<div class="b" style="left:58.5px;top:41px;width:49.5px;height:24.5px;background:#fff;border-radius:3px"></div>
<div class="nt" style="left:84px;top:49.3px;font-size:9.3px;color:#606060;transform:scaleY(1.12);transform-origin:0 7.9px">1</div>
<div class="nt" style="left:111.5px;top:49.3px;font-size:9.3px;color:#555;transform:scaleY(1.12);transform-origin:0 7.9px">of 1</div>
<div class="btn dis" style="left:135px;width:19px"><svg style="left:6.5px;top:7.8px" width="6" height="9" viewBox="0 0 6 9"><path d="M1.2 0.5 L4.8 4.5 L1.2 8.5" fill="none" stroke="#fff" stroke-opacity="0.85" stroke-width="1"/></svg></div>
<div class="btn dis" style="left:159.5px;width:23px"><svg style="left:6px;top:8px" width="11" height="8" viewBox="0 0 11 8"><path d="M1.4 0.5 L5.5 4 L1.4 7.5 M5 0.5 L9.1 4 L5 7.5" fill="none" stroke="#fff" stroke-opacity="0.85" stroke-width="1"/></svg></div>
<div class="b" style="left:189px;top:40px;width:73px;height:25.5px;background:#fff;border-radius:3px"></div>
<div class="nt" style="left:199.5px;top:48.6px;font-size:9.3px;color:#606060;transform:scaleY(1.12);transform-origin:0 7.9px">175%</div>
<svg style="position:absolute;left:248px;top:51px" width="5" height="3" viewBox="0 0 5 3"><path d="M0 0 H5 L2.5 3 Z" fill="#444"/></svg>
<div class="btn" style="left:266px;width:21px"><svg style="left:6px;top:8px" width="9" height="9" viewBox="0 0 9 9"><path d="M4.5 1 V8 M1 4.5 H8" stroke="#fff" stroke-width="1.7"/></svg></div>
<div class="btn" style="left:293.5px;width:21.5px"><svg style="left:6px;top:8px" width="9" height="9" viewBox="0 0 9 9"><path d="M0.5 4.5 H8.5" stroke="#fff" stroke-width="1.5"/></svg></div>
<div class="btn" style="left:321px;width:81px;padding-left:12px"><svg style="left:13px;top:7px" width="7" height="11" viewBox="0 0 7 11"><path d="M3.5 1 V10 M1 3.2 L3.5 0.8 L6 3.2 M1 7.8 L3.5 10.2 L6 7.8" fill="none" stroke="#fff" stroke-width="1.1"/></svg>Fit Height</div>
<div class="btn" style="left:407px;width:83px;padding-left:14px"><svg style="left:14px;top:9px" width="11" height="7" viewBox="0 0 11 7"><path d="M1 3.5 H10 M3.2 1 L0.8 3.5 L3.2 6 M7.8 1 L10.2 3.5 L7.8 6" fill="none" stroke="#fff" stroke-width="1.1"/></svg>Fit Width</div>
<div class="btn" style="left:495.5px;width:64px;padding-left:13px"><svg style="left:13px;top:7.5px" width="10" height="10" viewBox="0 0 10 10"><path d="M2.5 3.5 V0.8 H7.5 V3.5 M2.5 7.5 H1 V3.5 H9 V7.5 H7.5 M2.5 6 H7.5 V9.2 H2.5 Z" fill="none" stroke="#fff" stroke-width="0.9"/></svg>Print</div>
<div class="btn" style="left:565.5px;width:66.5px;padding-left:14px"><svg style="left:13px;top:6.5px" width="12" height="12" viewBox="0 0 12 12"><path d="M3 4.2 V1.6 Q3 0.8 3.8 0.8 H8.2 Q9 0.8 9 1.6 V2.6 M5 2.6 H10.2 Q11 2.6 11 3.4 V8" fill="none" stroke="#fff" stroke-width="0.9"/><rect x="0.8" y="4.4" width="8.6" height="6.6" rx="1" fill="none" stroke="#fff" stroke-width="0.9"/><path d="M0.8 7.4 H9.4" stroke="#fff" stroke-width="0.8"/></svg>Email</div>
<div class="btn" style="left:638px;width:136px;padding-left:12px"><svg style="left:14px;top:6.5px" width="6" height="11" viewBox="0 0 6 11"><rect x="0.6" y="0.6" width="4.8" height="9.8" rx="0.8" fill="none" stroke="#fff" stroke-width="0.9"/><path d="M2 8.8 H4" stroke="#fff" stroke-width="0.8"/></svg>Email/Text Participants</div>
<div class="btn" style="left:780px;width:59px;background:#6096ae;padding-right:12px">Export<svg style="left:40px;top:5.5px" width="14" height="13" viewBox="0 0 14 13"><path d="M5.4 6 V2.4 Q5.4 1.2 6.4 1.2 Q7.4 1.2 7.4 2.4 V6 H9.6 L6.4 9 L3.2 6 Z" fill="none" stroke="#fff" stroke-width="0.9" stroke-linejoin="round"/><path d="M3.6 7.6 H1.6 V10.9 H11.6 V7.6 H9.2" fill="none" stroke="#fff" stroke-width="1" stroke-linejoin="round"/></svg></div>
<div class="btn" style="left:843px;width:65px;padding-left:12px"><svg style="left:13px;top:7.5px" width="10" height="10" viewBox="0 0 10 10"><rect x="0.6" y="0.6" width="8.8" height="8.8" rx="0.5" fill="none" stroke="#fff" stroke-width="0.9"/><path d="M3 3 L7 7 M7 3 L3 7" stroke="#fff" stroke-width="0.9"/></svg>Close</div>

<!-- dropdown -->
<div class="b" style="left:754px;top:66px;width:85px;height:111px;background:#fff;border-radius:3px;box-shadow:0 1px 3px rgba(0,0,0,0.18)"></div>
<svg style="position:absolute;left:765px;top:76.5px" width="7" height="9" viewBox="0 0 7 9"><path d="M0.5 0.5 H4.5 L6.5 2.5 V8.5 H0.5 Z" fill="none" stroke="#e06060" stroke-width="0.9"/><path d="M1.8 6.8 L3.5 3.5 L5.2 6.8 Z" fill="none" stroke="#e06060" stroke-width="0.6"/></svg>
<div class="nt" style="left:774px;top:75.7px;font-size:9.8px;color:#36414b;transform:scaleY(1.2);transform-origin:0 8.3px">PDF</div>
<svg style="position:absolute;left:765px;top:104.5px" width="7" height="9" viewBox="0 0 7 9"><path d="M0.5 0.5 H4.5 L6.5 2.5 V8.5 H0.5 Z" fill="none" stroke="#4cae4c" stroke-width="0.9"/><path d="M2 4 L5 7.5 M5 4 L2 7.5" stroke="#4cae4c" stroke-width="0.7"/></svg>
<div class="nt" style="left:774px;top:103.6px;font-size:9.8px;color:#36414b;transform:scaleY(1.2);transform-origin:0 8.3px">Excel</div>
<svg style="position:absolute;left:765px;top:132.5px" width="7" height="9" viewBox="0 0 7 9"><path d="M0.5 0.5 H4.5 L6.5 2.5 V8.5 H0.5 Z" fill="#5a9ee8" stroke="#3b82e0" stroke-width="0.9"/><path d="M1.5 5 H5.5 M1.5 6.8 H5.5" stroke="#fff" stroke-width="0.7"/></svg>
<div class="nt" style="left:774px;top:131.6px;font-size:9.8px;color:#36414b;transform:scaleY(1.2);transform-origin:0 8.3px">CSV</div>
<svg style="position:absolute;left:765px;top:160px" width="10" height="8" viewBox="0 0 10 8"><rect x="0.5" y="0.8" width="9" height="6.6" rx="1" fill="none" stroke="#e08a70" stroke-width="0.9"/><path d="M5 0.8 V7.4 M1.8 3 H3.8 M6.2 3 H8.2" stroke="#e08a70" stroke-width="0.8"/></svg>
<div class="nt" style="left:777px;top:159.6px;font-size:9.8px;color:#36414b;transform:scaleY(1.2);transform-origin:0 8.3px">Mail Labels</div>

<!-- cursor -->
<svg style="position:absolute;left:825.3px;top:58.4px" width="14" height="16" viewBox="0 0 14 16"><path d="M4 1.5 C4 0.6 5.6 0.6 5.6 1.5 V7 L6.5 6.6 C7 6.4 7.6 6.6 7.8 7 L8.8 6.8 C9.3 6.7 9.8 7 10 7.4 L10.8 7.3 C11.5 7.3 12.2 7.8 12.2 8.6 V11.5 C12.2 13.5 10.8 15 8.8 15 H7.2 C5.8 15 5 14.3 4.3 13.3 L1.5 9.6 C1 8.9 1.8 8 2.5 8.5 L4 9.8 Z" fill="#f5a800" stroke="#6b3f00" stroke-width="0.8"/></svg>

<!-- red box -->
<div class="b" style="left:746.5px;top:28.5px;width:108.3px;height:157.5px;border:2.6px solid #f00"></div>
</body></html>
